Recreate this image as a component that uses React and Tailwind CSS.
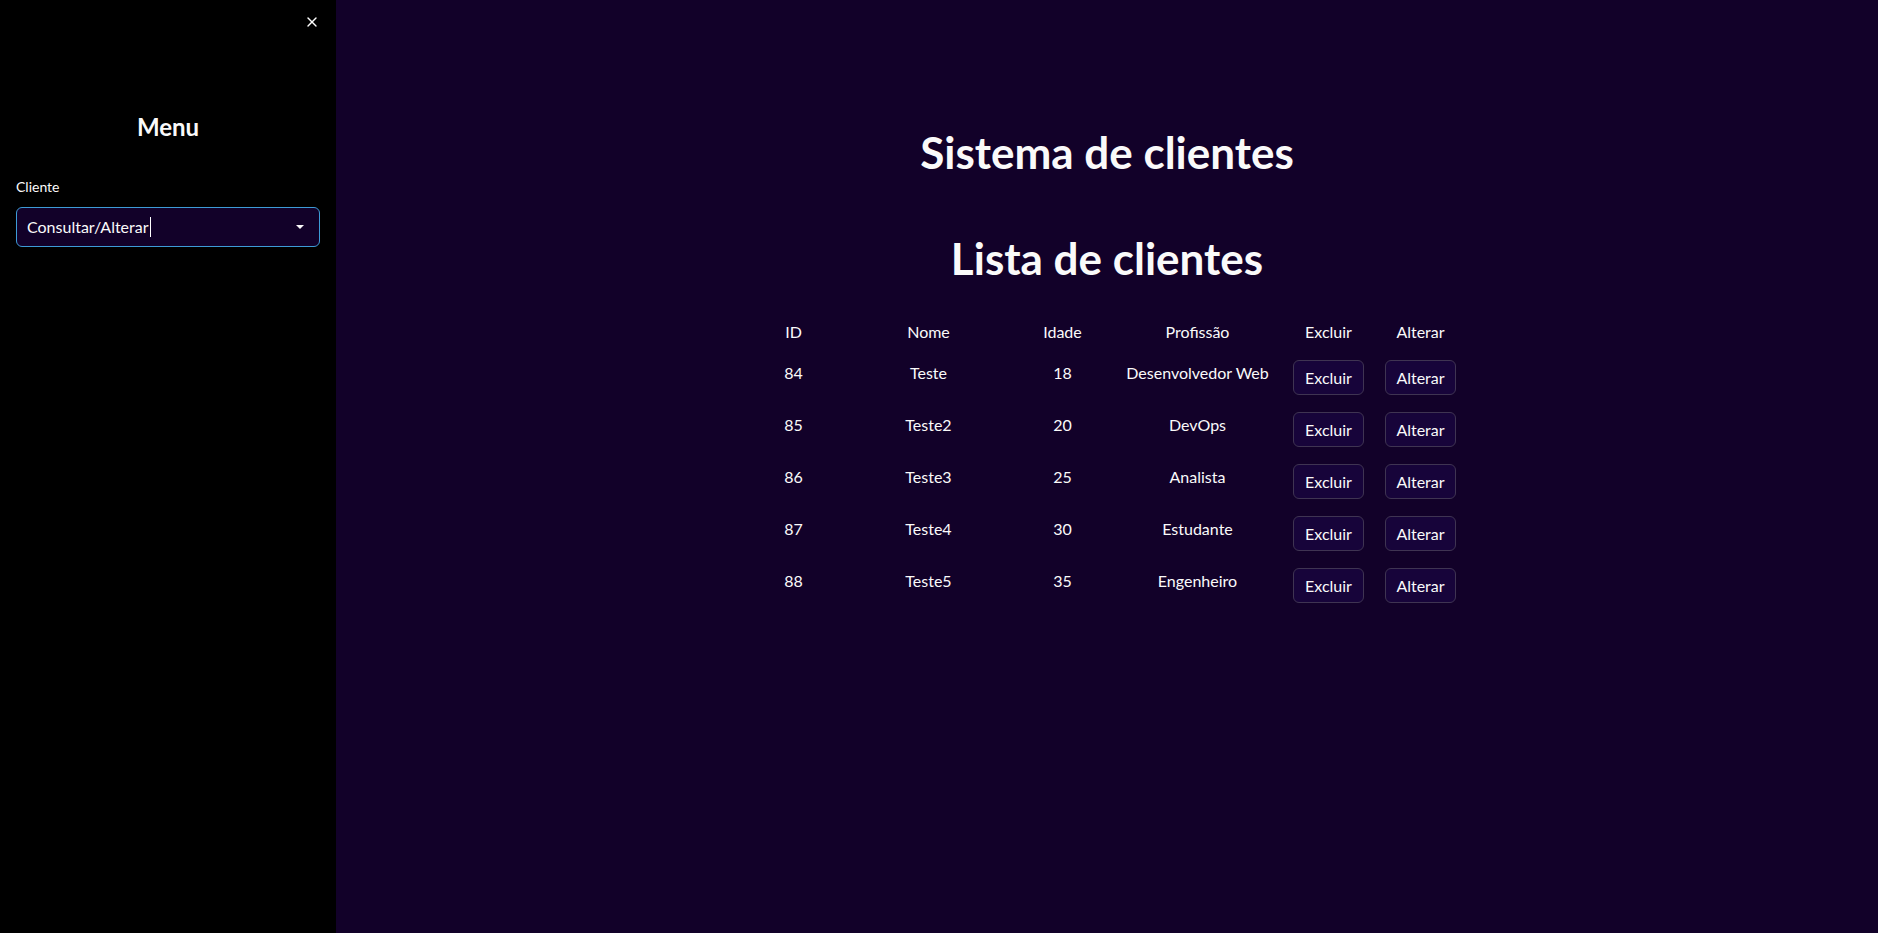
import React from "react";
import { X } from "lucide-react";

const clientes = [
  { id: 84, nome: "Teste", idade: 18, profissao: "Desenvolvedor Web" },
  { id: 85, nome: "Teste2", idade: 20, profissao: "DevOps" },
  { id: 86, nome: "Teste3", idade: 25, profissao: "Analista" },
  { id: 87, nome: "Teste4", idade: 30, profissao: "Estudante" },
  { id: 88, nome: "Teste5", idade: 35, profissao: "Engenheiro" },
];

const cols = "grid grid-cols-[100px_170px_98px_172px_90px_94px] items-start text-center text-[16px] leading-[26px]";

const ActionButton = ({ label }) => (
  <button className="justify-self-center h-[35px] w-[71px] rounded-md border border-[#3f3452] bg-[#17043a] text-[16px] text-[#fafafa]">
    {label}
  </button>
);

const App = () => {
  return (
    <div className="flex h-screen w-full font-['Lato',sans-serif] text-[#fafafa]">
      {/* Sidebar */}
      <aside className="relative w-[336px] shrink-0 bg-black px-4">
        <X size={16} strokeWidth={2} className="absolute right-[16px] top-[14px] text-white" />
        <h2 className="pt-[110px] text-center text-[24px] font-bold leading-[34px]">Menu</h2>
        <label className="mt-[33px] block text-[14px] leading-[20px]">Cliente</label>
        <div className="mt-[10px] flex h-[40px] items-center justify-between rounded-md border border-[#3d9bd6] bg-[#120129] pl-[10px] pr-[14px]">
          <span className="flex items-center text-[16px]">
            Consultar/Alterar
            <span className="ml-[1px] inline-block h-[20px] w-[1px] bg-white" />
          </span>
          <svg width="10" height="6" viewBox="0 0 10 6">
            <path d="M1 1h8L5 5z" fill="#fafafa" />
          </svg>
        </div>
      </aside>

      {/* Main */}
      <main className="flex-1 bg-[#120129]">
        <div className="flex flex-col items-center pt-[126px]">
          <h1 className="text-[44px] font-bold leading-[53px]">Sistema de clientes</h1>
          <h1 className="mt-[53px] text-[44px] font-bold leading-[53px]">Lista de clientes</h1>

          <div className="-ml-[3px] mt-[34px] flex flex-col">
            <div className={cols}>
              <span>ID</span>
              <span>Nome</span>
              <span>Idade</span>
              <span>Profissão</span>
              <span>Excluir</span>
              <span>Alterar</span>
            </div>

            <div className={`mt-[15px] gap-y-[17px] ${cols}`}>
              {clientes.map((c) => (
                <React.Fragment key={c.id}>
                  <span>{c.id}</span>
                  <span>{c.nome}</span>
                  <span>{c.idade}</span>
                  <span>{c.profissao}</span>
                  <ActionButton label="Excluir" />
                  <ActionButton label="Alterar" />
                </React.Fragment>
              ))}
            </div>
          </div>
        </div>
      </main>
    </div>
  );
};

export default App;
